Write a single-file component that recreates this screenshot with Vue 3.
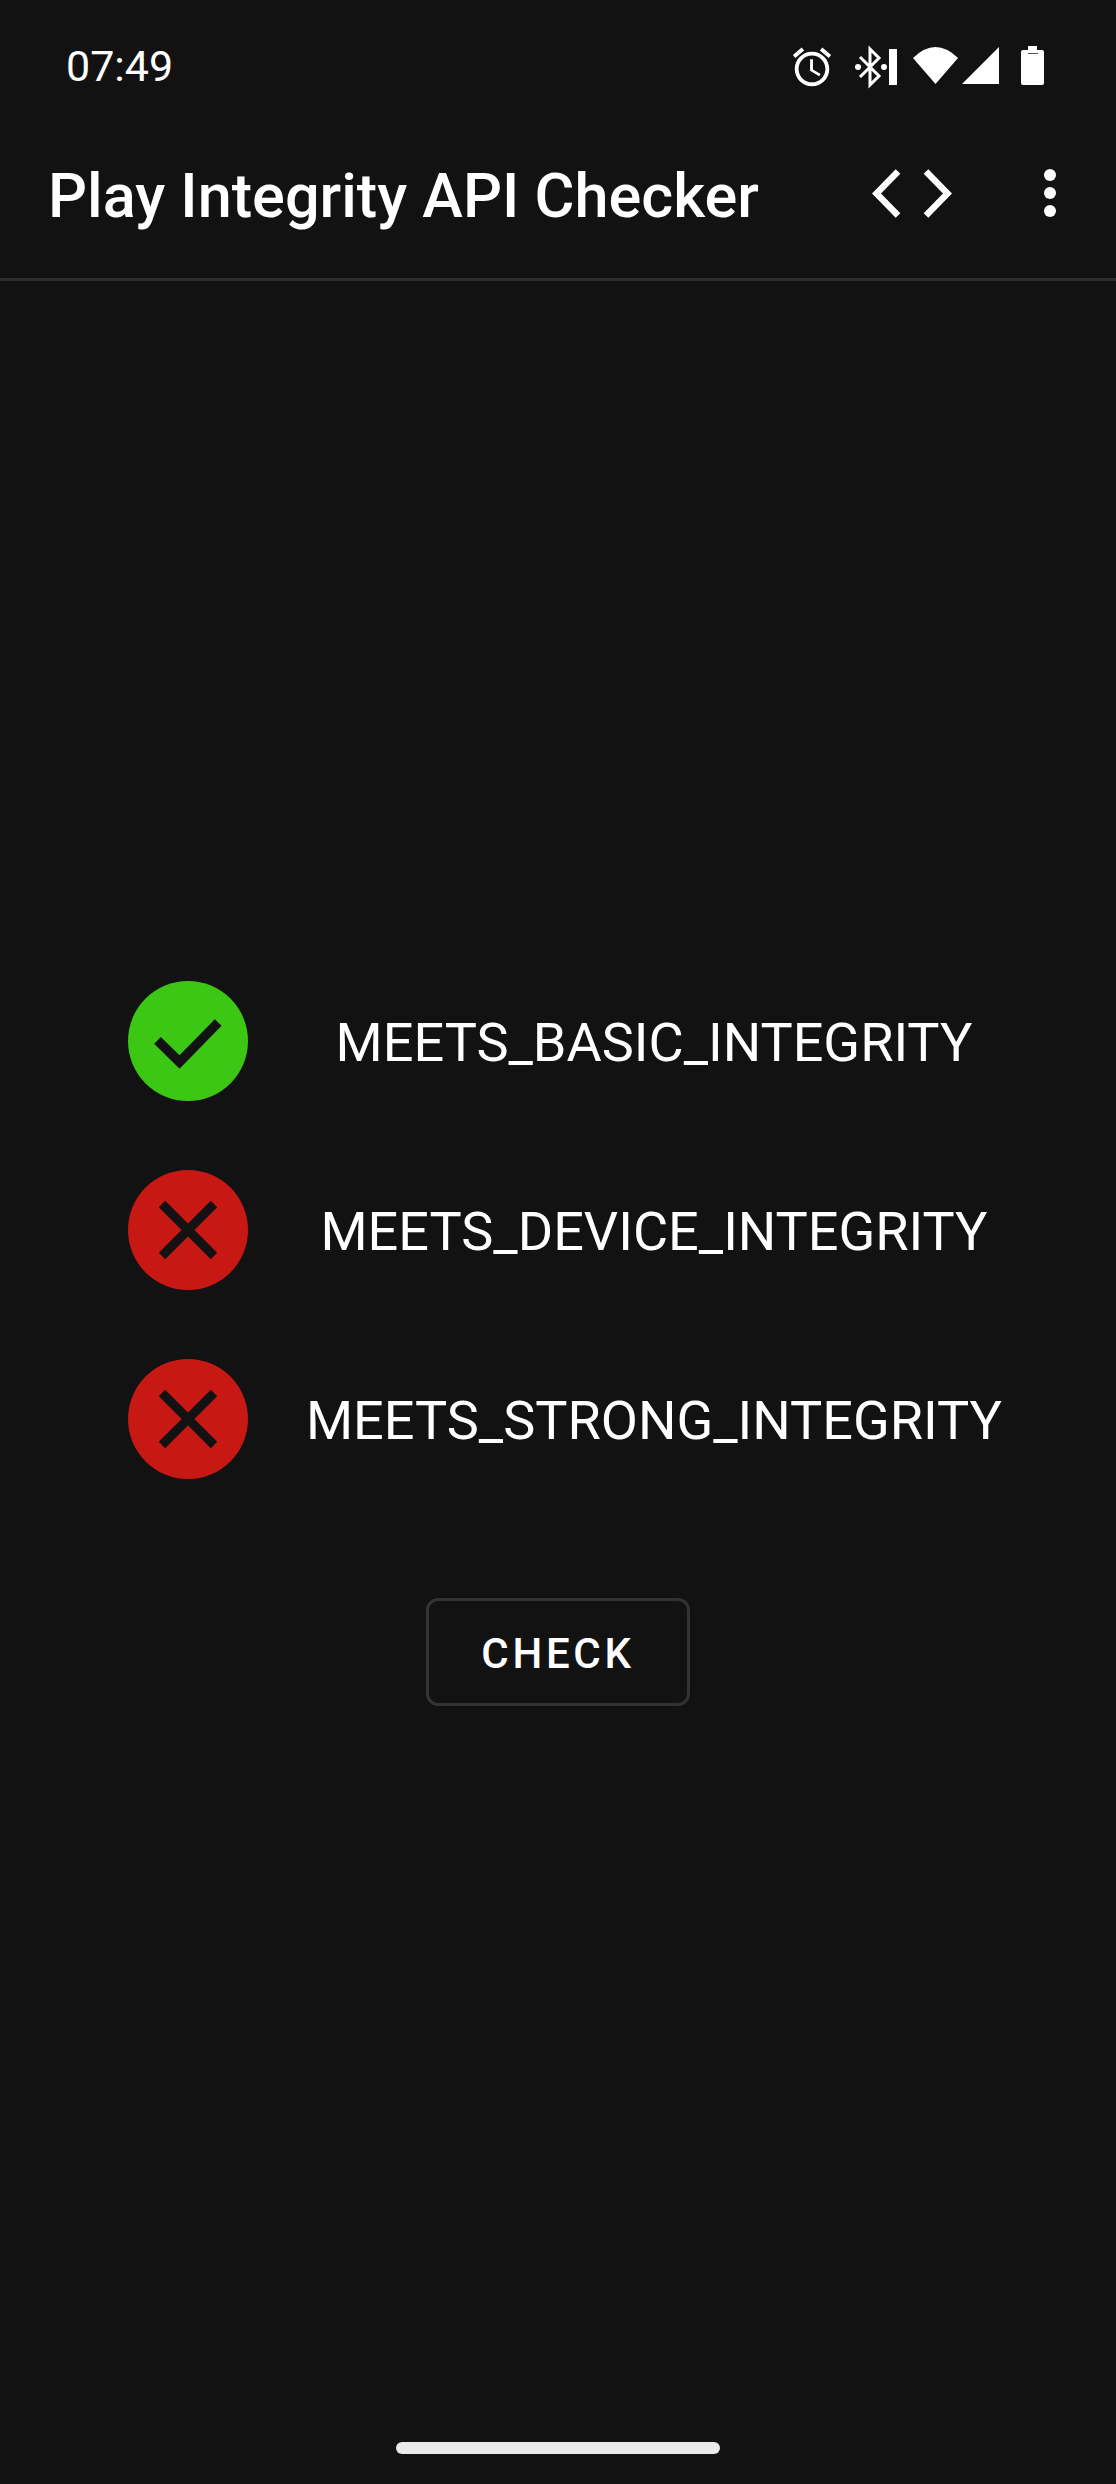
<script setup>
const checks = [
  { name: 'MEETS_BASIC_INTEGRITY', ok: true },
  { name: 'MEETS_DEVICE_INTEGRITY', ok: false },
  { name: 'MEETS_STRONG_INTEGRITY', ok: false },
]
</script>

<template>
  <div class="screen">
    <div class="status-bar">
      <span class="time">07:49</span>
      <div class="status-icons">
        <svg class="ic-alarm" width="46" height="46" viewBox="0 0 24 24" fill="#fff">
          <path d="M22 5.720l-4.600-3.860-1.290 1.530 4.600 3.860L22 5.720zM7.880 3.390L6.600 1.860 2 5.710l1.290 1.530 4.590-3.850zM12.500 8H11v6l4.750 2.850.75-1.230-4-2.370V8zM12 4c-4.970 0-9 4.030-9 9s4.030 9 9 9 9-4.030 9-9-4.030-9-9-9zm0 16c-3.870 0-7-3.130-7-7s3.130-7 7-7 7 3.130 7 7-3.130 7-7 7z" />
        </svg>
        <svg class="ic-bt" width="42" height="46" viewBox="0 0 42 46">
          <path d="M5 13 L24 32 L15 41 V5 L24 14 L5 33" fill="none" stroke="#fff" stroke-width="3" />
          <circle cx="3" cy="23" r="3" fill="#fff" />
          <circle cx="29" cy="23" r="3" fill="#fff" />
          <rect x="34" y="5" width="8" height="36" fill="#fff" />
        </svg>
        <svg class="ic-wifi" width="45" height="46" viewBox="0 0 45 46">
          <path d="M0 14 Q22.500 -8 45 14 L22.500 40 Z" fill="#fff" />
        </svg>
        <svg class="ic-signal" width="37" height="46" viewBox="0 0 37 46">
          <path d="M0 40 L37 3 V40 Z" fill="#fff" />
        </svg>
        <svg class="ic-battery" width="23" height="46" viewBox="0 0 23 46">
          <path d="M7 2 H16 V6 H21 Q23 6 23 8 V39 Q23 41 21 41 H2 Q0 41 0 39 V8 Q0 6 2 6 H7 Z" fill="#fff" />
          <rect x="7" y="9" width="10" height="1" fill="#555" />
        </svg>
      </div>
    </div>

    <header class="app-bar">
      <h1 class="title">Play Integrity API Checker</h1>
      <div class="actions">
        <svg width="80" height="52" viewBox="0 0 80 52" fill="none" stroke="#fff" stroke-width="6.500">
          <path d="M26 3.500 L4.500 25.500 L26 47.500" />
          <path d="M54 3.500 L75.500 25.500 L54 47.500" />
        </svg>
        <svg class="more" width="12" height="48" viewBox="0 0 12 48" fill="#fff">
          <circle cx="6" cy="6" r="6" />
          <circle cx="6" cy="24" r="6" />
          <circle cx="6" cy="42" r="6" />
        </svg>
      </div>
    </header>

    <main class="content">
      <div class="checks">
        <div v-for="c in checks" :key="c.name" class="check-row">
          <div class="badge" :class="c.ok ? 'badge-ok' : 'badge-fail'">
            <svg v-if="c.ok" width="120" height="120" viewBox="0 0 120 120" fill="none" stroke="#121212" stroke-width="9.500">
              <path d="M29.500 59.300 L51.500 81 L90.200 41.500" />
            </svg>
            <svg v-else width="120" height="120" viewBox="0 0 120 120" fill="none" stroke="#121212" stroke-width="9">
              <path d="M34 34 L86 86 M86 34 L34 86" />
            </svg>
          </div>
          <span class="check-name">{{ c.name }}</span>
        </div>
      </div>
      <button class="check-btn">CHECK</button>
    </main>

    <div class="home-indicator"></div>
  </div>
</template>

<style scoped>
.screen {
  width: 1116px;
  height: 2484px;
  background: #121212;
  color: #fff;
  font-family: Roboto, "Liberation Sans", sans-serif;
  display: flex;
  flex-direction: column;
  overflow: hidden;
}

.status-bar {
  height: 89px;
  padding: 44px 72px 0 66px;
  box-sizing: border-box;
  display: flex;
  justify-content: space-between;
  align-items: flex-start;
}

.time {
  font-size: 43px;
  line-height: 44px;
  margin-top: 0;
}

.status-icons {
  display: flex;
  align-items: flex-start;
}

.ic-bt { margin-left: 20px; }
.ic-wifi { margin-left: 16px; }
.ic-signal { margin-left: 4px; }
.ic-battery { margin-left: 22px; }

.app-bar {
  height: 192px;
  box-sizing: border-box;
  border-bottom: 3px solid #2e2e2e;
  padding: 0 60px 0 48px;
  display: flex;
  align-items: flex-start;
  justify-content: space-between;
}

.title {
  margin: 0;
  margin-top: 72px;
  font-size: 61.200px;
  line-height: 70px;
  font-weight: 500;
}

.actions {
  display: flex;
  align-items: flex-start;
  padding-top: 79px;
}

.more {
  margin-left: 92px;
  margin-top: 1px;
}

.content {
  flex: 1;
  padding-top: 700px;
  display: flex;
  flex-direction: column;
  align-items: center;
}

.checks {
  width: 100%;
  box-sizing: border-box;
  padding: 0 56px 0 128px;
  display: flex;
  flex-direction: column;
  gap: 69px;
}

.check-row {
  display: flex;
  align-items: center;
}

.badge {
  width: 120px;
  height: 120px;
  border-radius: 50%;
  flex-shrink: 0;
}

.badge svg {
  display: block;
}

.badge-ok { background: #3cc714; }
.badge-fail { background: #c71814; }

.check-name {
  flex: 1;
  text-align: center;
  font-size: 54px;
  margin-top: 2px;
}

.check-btn {
  margin-top: 119px;
  width: 264px;
  height: 108px;
  background: transparent;
  border: 3px solid #333;
  border-radius: 12px;
  color: #fff;
  font-family: inherit;
  font-size: 42px;
  font-weight: 500;
  letter-spacing: 3.700px;
  padding: 2px 0 0;
}

.home-indicator {
  width: 324px;
  height: 12px;
  border-radius: 6px;
  background: #eaeaea;
  margin: 0 auto 30px;
  flex-shrink: 0;
}
</style>
